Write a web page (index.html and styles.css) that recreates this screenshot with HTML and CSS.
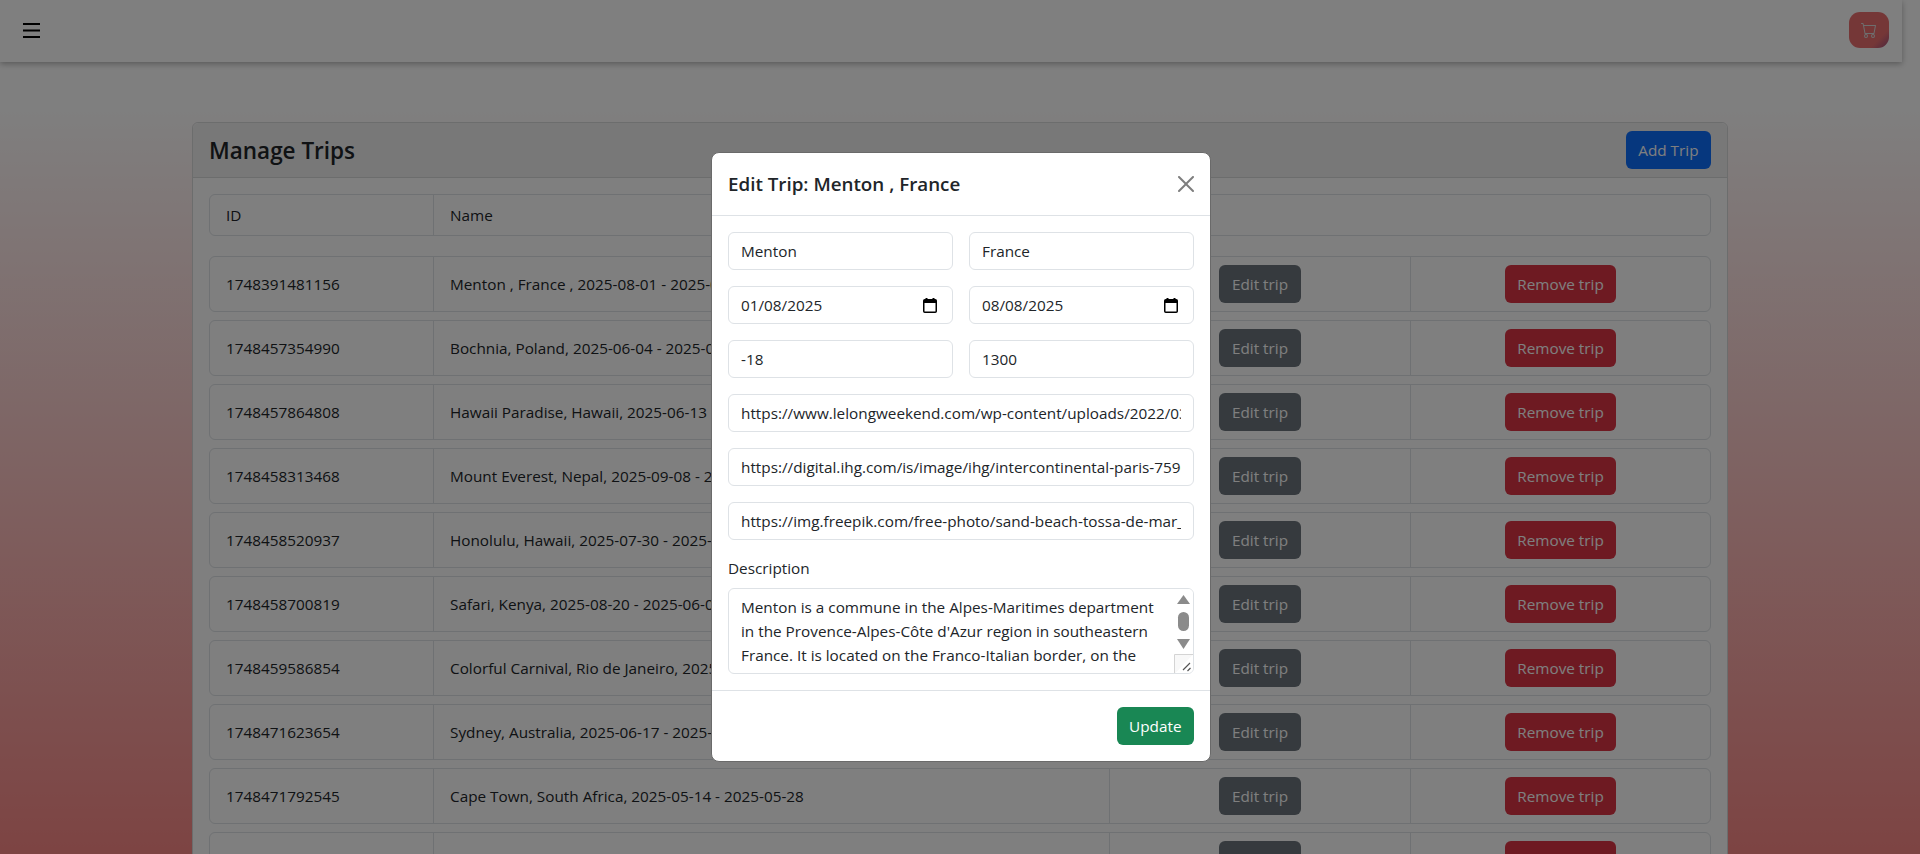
FILE: index.html
```html
<!DOCTYPE html>
<html lang="en">
<head>
    <meta charset="UTF-8">
    <meta name="viewport" content="width=device-width, initial-scale=1.0">
    <title>Manage Trips</title>
    <link rel="stylesheet" href="styles.css">
</head>
<body>

    <nav class="topbar">
        <button type="button" class="menu-btn" aria-label="Menu">
            <svg width="17" height="15" viewBox="0 0 17 15"><path d="M0 1h17M0 7.5h17M0 14h17" stroke="#000" stroke-width="2"/></svg>
        </button>
        <button type="button" class="cart-btn" aria-label="Cart">
            <svg width="16" height="16" viewBox="0 0 16 16" fill="currentColor"><path d="M0 1.5A.5.5 0 0 1 .5 1H2a.5.5 0 0 1 .485.379L2.89 3H14.5a.5.5 0 0 1 .491.592l-1.5 8A.5.5 0 0 1 13 12H4a.5.5 0 0 1-.491-.408L2.01 3.607 1.61 2H.5a.5.5 0 0 1-.5-.5M3.102 4l1.313 7h8.17l1.313-7zM5 12a2 2 0 1 0 0 4 2 2 0 0 0 0-4m7 0a2 2 0 1 0 0 4 2 2 0 0 0 0-4m-7 1a1 1 0 1 1 0 2 1 1 0 0 1 0-2m7 0a1 1 0 1 1 0 2 1 1 0 0 1 0-2"/></svg>
        </button>
    </nav>

    <main class="card">
        <div class="card-header">
            <h3>Manage Trips</h3>
            <button type="button" class="btn btn-blue">Add Trip</button>
        </div>
        <div class="card-body">
            <div class="trip-head">
                <div class="cell">ID</div>
                <div class="cell">Name</div>
            </div>

            <div class="trip-list">
                <div class="trip-row">
                    <div class="cell">1748391481156</div>
                    <div class="cell">Menton , France , 2025-08-01 - 2025-08-08</div>
                    <div class="cell cell-btn"><button type="button" class="btn btn-gray">Edit trip</button></div>
                    <div class="cell cell-btn"><button type="button" class="btn btn-red">Remove trip</button></div>
                </div>
                <div class="trip-row">
                    <div class="cell">1748457354990</div>
                    <div class="cell">Bochnia, Poland, 2025-06-04 - 2025-06-11</div>
                    <div class="cell cell-btn"><button type="button" class="btn btn-gray">Edit trip</button></div>
                    <div class="cell cell-btn"><button type="button" class="btn btn-red">Remove trip</button></div>
                </div>
                <div class="trip-row">
                    <div class="cell">1748457864808</div>
                    <div class="cell">Hawaii Paradise, Hawaii, 2025-06-13 - 2025-06-20</div>
                    <div class="cell cell-btn"><button type="button" class="btn btn-gray">Edit trip</button></div>
                    <div class="cell cell-btn"><button type="button" class="btn btn-red">Remove trip</button></div>
                </div>
                <div class="trip-row">
                    <div class="cell">1748458313468</div>
                    <div class="cell">Mount Everest, Nepal, 2025-09-08 - 2025-09-22</div>
                    <div class="cell cell-btn"><button type="button" class="btn btn-gray">Edit trip</button></div>
                    <div class="cell cell-btn"><button type="button" class="btn btn-red">Remove trip</button></div>
                </div>
                <div class="trip-row">
                    <div class="cell">1748458520937</div>
                    <div class="cell">Honolulu, Hawaii, 2025-07-30 - 2025-08-06</div>
                    <div class="cell cell-btn"><button type="button" class="btn btn-gray">Edit trip</button></div>
                    <div class="cell cell-btn"><button type="button" class="btn btn-red">Remove trip</button></div>
                </div>
                <div class="trip-row">
                    <div class="cell">1748458700819</div>
                    <div class="cell">Safari, Kenya, 2025-08-20 - 2025-06-03</div>
                    <div class="cell cell-btn"><button type="button" class="btn btn-gray">Edit trip</button></div>
                    <div class="cell cell-btn"><button type="button" class="btn btn-red">Remove trip</button></div>
                </div>
                <div class="trip-row">
                    <div class="cell">1748459586854</div>
                    <div class="cell">Colorful Carnival, Rio de Janeiro, 2025-02-10 - 2025-02-17</div>
                    <div class="cell cell-btn"><button type="button" class="btn btn-gray">Edit trip</button></div>
                    <div class="cell cell-btn"><button type="button" class="btn btn-red">Remove trip</button></div>
                </div>
                <div class="trip-row">
                    <div class="cell">1748471623654</div>
                    <div class="cell">Sydney, Australia, 2025-06-17 - 2025-06-24</div>
                    <div class="cell cell-btn"><button type="button" class="btn btn-gray">Edit trip</button></div>
                    <div class="cell cell-btn"><button type="button" class="btn btn-red">Remove trip</button></div>
                </div>
                <div class="trip-row">
                    <div class="cell">1748471792545</div>
                    <div class="cell">Cape Town, South Africa, 2025-05-14 - 2025-05-28</div>
                    <div class="cell cell-btn"><button type="button" class="btn btn-gray">Edit trip</button></div>
                    <div class="cell cell-btn"><button type="button" class="btn btn-red">Remove trip</button></div>
                </div>
                <div class="trip-row">
                    <div class="cell"></div>
                    <div class="cell"></div>
                    <div class="cell cell-btn"><button type="button" class="btn btn-gray">Edit trip</button></div>
                    <div class="cell cell-btn"><button type="button" class="btn btn-red">Remove trip</button></div>
                </div>
            </div>
        </div>
    </main>

    <div class="backdrop"></div>

    <div class="modal">
        <div class="modal-box">
            <div class="modal-header">
                <h5>Edit Trip: Menton , France</h5>
                <button type="button" class="close-btn" aria-label="Close">
                    <svg width="16" height="16" viewBox="0 0 16 16" fill="#000"><path d="M.293.293a1 1 0 0 1 1.414 0L8 6.586 14.293.293a1 1 0 1 1 1.414 1.414L9.414 8l6.293 6.293a1 1 0 0 1-1.414 1.414L8 9.414l-6.293 6.293a1 1 0 0 1-1.414-1.414L6.586 8 .293 1.707a1 1 0 0 1 0-1.414"/></svg>
                </button>
            </div>

            <form class="modal-body">
                <div class="two-col">
                    <input type="text" class="field" value="Menton">
                    <input type="text" class="field" value="France">
                </div>
                <div class="two-col">
                    <div class="date-field">
                        <input type="text" class="field" value="01/08/2025">
                        <svg class="date-icon" width="14" height="15" viewBox="0 0 14 15"><path d="M3.5 0v2M10.500 0v2" stroke="#000" stroke-width="2"/><rect x=".75" y="1.750" width="12.500" height="12.500" rx="1" fill="none" stroke="#000" stroke-width="1.500"/><path d="M1 2h12v3H1z"/></svg>
                    </div>
                    <div class="date-field">
                        <input type="text" class="field" value="08/08/2025">
                        <svg class="date-icon" width="14" height="15" viewBox="0 0 14 15"><path d="M3.5 0v2M10.500 0v2" stroke="#000" stroke-width="2"/><rect x=".75" y="1.750" width="12.500" height="12.500" rx="1" fill="none" stroke="#000" stroke-width="1.500"/><path d="M1 2h12v3H1z"/></svg>
                    </div>
                </div>
                <div class="two-col">
                    <input type="text" class="field" value="-18">
                    <input type="text" class="field" value="1300">
                </div>
                <input type="text" class="field" value="https://www.lelongweekend.com/wp-content/uploads/2022/03/menton-france.jpg">
                <input type="text" class="field" value="https://digital.ihg.com/is/image/ihg/intercontinental-paris-7596189342">
                <input type="text" class="field" value="https://img.freepik.com/free-photo/sand-beach-tossa-de-mar_1398-3701.jpg">

                <div class="desc-group">
                    <label for="description">Description</label>
                    <div class="desc-wrap">
                        <textarea id="description" class="field desc-text">Menton is a commune in the Alpes-Maritimes department in the Provence-Alpes-Côte d'Azur region in southeastern France. It is located on the Franco-Italian border, on the Mediterranean coast.</textarea>
                        <svg class="desc-bar" width="19" height="84" viewBox="0 0 19 84">
                            <rect width="19" height="84" fill="#fff"/>
                            <path d="M9.500 6L16 15H3z" fill="#8b8b8b"/>
                            <rect x="4" y="23" width="11" height="19" rx="5.500" fill="#8b8b8b"/>
                            <path d="M3 50h13L9.500 60z" fill="#8b8b8b"/>
                            <path d="M.5 85V65.500H19" fill="#f8f8f8" stroke="#d4d4d4"/>
                            <path d="M9 81l7-7M13.500 82l3-3" stroke="#555" stroke-width="1.200"/>
                        </svg>
                    </div>
                </div>
            </form>

            <div class="modal-footer">
                <button type="button" class="btn btn-green">Update</button>
            </div>
        </div>
    </div>

</body>
</html>
```

FILE: styles.css
```css
*{
    box-sizing: border-box;
}
body{
    margin: 0;
    height: 100vh;
    overflow: hidden;
    font-family: "Open Sans", sans-serif;
    font-size: 15.3px;
    line-height: 24px;
    color: #212529;
    background: linear-gradient(to bottom, #fff 105px, rgb(250, 136, 134) 854px);
}
button{
    font-family: inherit;
}

/* top bar */
.topbar{
    width: calc(100% - 18px);
    height: 62px;
    padding: 12px 13px 14px 23px;
    display: flex;
    justify-content: space-between;
    align-items: center;
    background: #fff;
    box-shadow: 0 2px 6px rgba(0,0,0,0.3);
}
.menu-btn{
    padding: 0;
    border: none;
    background: none;
    display: flex;
}
.cart-btn{
    width: 40px;
    height: 36px;
    border: none;
    border-radius: 11px;
    color: #ddd;
    display: flex;
    justify-content: center;
    align-items: center;
    background: linear-gradient(135deg, #ea6f6f 75%, #9c4f7c);
}

/* trips card */
.card{
    width: 80%;
    margin: 60px auto 0;
    background: #fff;
    border: 1px solid #d9dadb;
    border-radius: 6px;
}
.card-header{
    padding: 8px 16px;
    display: flex;
    justify-content: space-between;
    align-items: center;
    background: #f0f0f0;
    border-bottom: 1px solid #d9dadb;
    border-radius: 6px 6px 0 0;
}
.card-header h3{
    margin: 0;
    padding-top: 2px;
    font-size: 22.5px;
    line-height: 36px;
    font-weight: 600;
}
.card-body{
    padding: 16px;
}
.trip-head,
.trip-row{
    display: grid;
    grid-template-columns: 224px 676px 301px 1fr;
    border: 1px solid #dee2e6;
    border-radius: 6px;
}
.trip-head{
    grid-template-columns: 224px 1fr;
}
.trip-list{
    margin-top: 20px;
    display: flex;
    flex-direction: column;
    gap: 8px;
}
.cell{
    padding: 8px 16px;
    border-right: 1px solid #dee2e6;
}
.cell:last-child{
    border-right: none;
}
.trip-row .cell{
    display: flex;
    align-items: center;
    white-space: nowrap;
}
.trip-row .cell-btn{
    justify-content: center;
}

/* buttons */
.btn{
    height: 38px;
    padding: 0 12.5px;
    border: none;
    border-radius: 6px;
    font-size: 15.3px;
    color: #fff;
    cursor: pointer;
}
.btn-blue{
    background: #0d6efd;
}
.btn-gray{
    background: #6c757d;
}
.btn-red{
    background: #dc3545;
}
.btn-green{
    background: #198754;
}

/* modal */
.backdrop{
    position: fixed;
    inset: 0;
    background: rgba(0,0,0,0.5);
}
.modal{
    position: fixed;
    inset: 0;
    padding: 152px 0 0 2px;
    display: flex;
    justify-content: center;
    align-items: flex-start;
}
.modal-box{
    width: 500px;
    background: #fff;
    border: 1px solid #6a6a6a;
    border-radius: 8px;
}
.modal-header{
    padding: 16px;
    display: flex;
    justify-content: space-between;
    align-items: center;
    border-bottom: 1px solid #dee2e6;
}
.modal-header h5{
    margin: 0;
    font-size: 18.8px;
    line-height: 30px;
    font-weight: 600;
}
.close-btn{
    padding: 0;
    border: none;
    background: none;
    opacity: 0.5;
    display: flex;
}
.modal-body{
    padding: 16px;
    display: flex;
    flex-direction: column;
    gap: 16px;
}
.two-col{
    display: grid;
    grid-template-columns: 1fr 1fr;
    gap: 16px;
}
.field{
    display: block;
    width: 100%;
    height: 38px;
    padding: 6px 12px;
    border: 1px solid #dee2e6;
    border-radius: 6px;
    font-family: inherit;
    font-size: 15.3px;
    line-height: 24px;
    color: #212529;
    background: #fff;
}
.date-field,
.desc-wrap{
    position: relative;
}
.date-icon{
    position: absolute;
    top: 12px;
    right: 16px;
}
.desc-group label{
    display: block;
    margin-bottom: 8px;
}
.desc-text{
    height: 86px;
    padding-right: 31px;
    overflow: hidden;
    resize: none;
}
.desc-bar{
    position: absolute;
    top: 1px;
    right: 1px;
    border-radius: 0 5px 5px 0;
    pointer-events: none;
}
.modal-footer{
    padding: 16px;
    display: flex;
    justify-content: flex-end;
    border-top: 1px solid #dee2e6;
}
```
